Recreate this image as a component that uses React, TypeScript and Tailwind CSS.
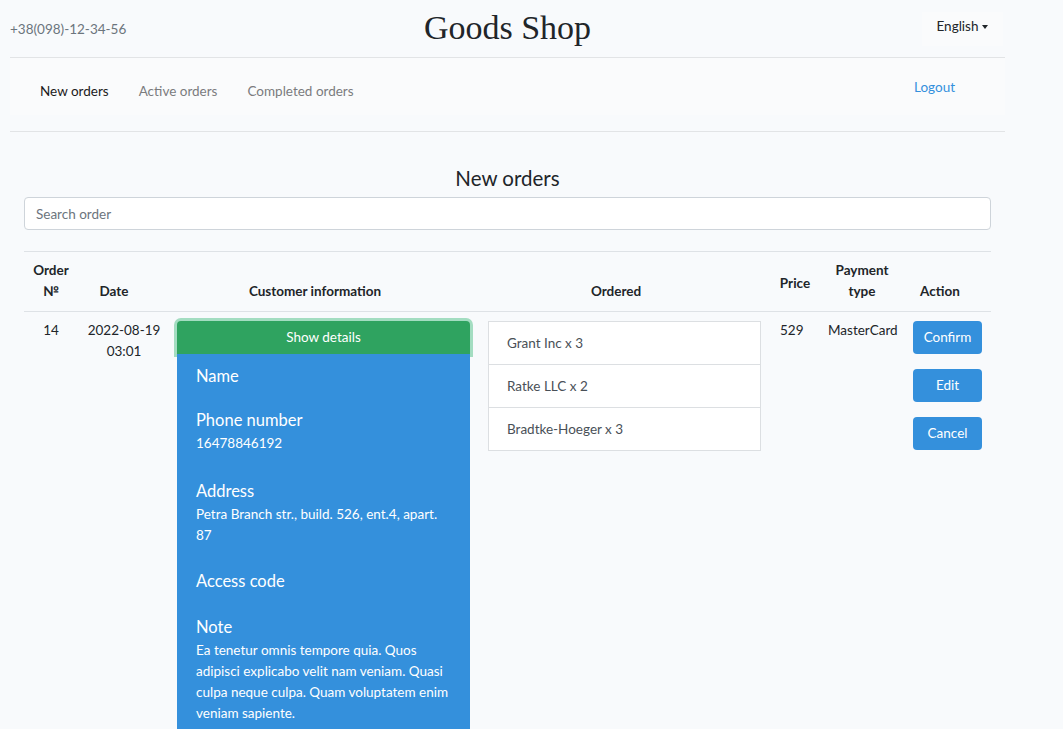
import React from "react";

const orderItems = ["Grant Inc x 3", "Ratke LLC x 2", "Bradtke-Hoeger x 3"];

function DetailBlock({
  title,
  lines,
  gap,
}: {
  title: string;
  lines: string[];
  gap: string;
}) {
  return (
    <div className={gap}>
      <div className="text-[16.5px] leading-[24px]">{title}</div>
      {lines.length > 0 && (
        <div className="pt-[1px] text-[13.5px] leading-[21px]">
          {lines.map((line) => (
            <div key={line} className="whitespace-nowrap">
              {line}
            </div>
          ))}
        </div>
      )}
    </div>
  );
}

function ActionButton({ label }: { label: string }) {
  return (
    <button className="h-[33px] w-[69px] rounded-[4px] bg-[#3490dc] text-[13.5px] text-white">
      {label}
    </button>
  );
}

export default function App() {
  return (
    <div className="min-h-screen bg-[#f8fafc] font-['Lato','Noto_Sans',sans-serif] text-[13.5px] text-[#212529]">
      <div className="ml-[10px] w-[995px]">
        <header className="grid h-[57px] grid-cols-[1fr_auto_1fr] items-center">
          <div className="pt-[1px] text-[#6c757d]">+38(098)-12-34-56</div>
          <h1 className="pb-[2px] font-['Liberation_Serif',serif] text-[34px] leading-[40px] text-[#212529]">
            Goods Shop
          </h1>
          <div className="flex justify-end">
            <div className="mr-[2px] flex h-[34px] w-[81px] items-center justify-center gap-[4px] bg-[#fafbfc] pb-[4px]">
              <span>English</span>
              <span className="mt-[1px] border-x-[3px] border-t-[4px] border-x-transparent border-t-[#212529]" />
            </div>
          </div>
        </header>

        <nav className="flex h-[58px] items-start justify-between border-t border-[#e2e4e6] bg-[#fafbfc] pl-[15px] pr-[34px]">
          <ul className="mt-[23px] flex">
            <li className="px-[15px] text-[#1a1a1a]">New orders</li>
            <li className="px-[15px] text-[#7b7c7e]">Active orders</li>
            <li className="px-[15px] text-[#7b7c7e]">Completed orders</li>
          </ul>
          <a className="mr-[16px] mt-[19px] text-[#3490dc]">Logout</a>
        </nav>
        <div className="mt-[16px] border-t border-[#e2e4e6]" />
      </div>

      <main className="ml-[24px] w-[967px]">
        <h2 className="mt-[31px] text-center text-[20.5px] leading-[30px]">New orders</h2>
        <input
          className="mt-[4px] h-[33px] w-full rounded-[4px] border border-[#ced4da] bg-white px-[11px] text-[13.5px] placeholder:text-[#6c757d]"
          placeholder="Search order"
        />

        <div className="mt-[21px] border-t border-[#dee2e6]">
          <div className="flex h-[60px] border-b border-[#dee2e6] pb-[9px] font-bold leading-[21px]">
            <div className="flex w-[54px] items-end justify-center text-center">
              Order
              <br />№
            </div>
            <div className="flex w-[72px] items-end justify-center">Date</div>
            <div className="flex w-[330px] items-end justify-center">Customer information</div>
            <div className="flex w-[272px] items-end justify-center">Ordered</div>
            <div className="ml-[18px] flex w-[50px] items-center justify-center pt-[12px]">Price</div>
            <div className="flex w-[84px] items-end justify-center text-center">
              Payment
              <br />
              type
            </div>
            <div className="flex w-[72px] items-end justify-center">Action</div>
          </div>

          <div className="flex items-start leading-[21px]">
            <div className="w-[54px] pt-[8px] text-center">14</div>
            <div className="w-[92px] pt-[8px] text-center">
              2022-08-19
              <br />
              03:01
            </div>
            <div className="ml-[7px] mt-[9px] w-[293px]">
              <button className="h-[33px] w-full rounded-t-[4px] bg-[#2fa360] text-white shadow-[0_0_0_3px_rgba(77,192,134,0.5)]">
                Show details
              </button>
              <div className="relative h-[380px] bg-[#3490dc] px-[19px] pt-[10px] text-white">
                <DetailBlock title="Name" lines={[]} gap="mb-[20px]" />
                <DetailBlock title="Phone number" lines={["16478846192"]} gap="mb-[25px]" />
                <DetailBlock
                  title="Address"
                  lines={["Petra Branch str., build. 526, ent.4, apart.", "87"]}
                  gap="mb-[23px]"
                />
                <DetailBlock title="Access code" lines={[]} gap="mb-[22px]" />
                <DetailBlock
                  title="Note"
                  lines={[
                    "Ea tenetur omnis tempore quia. Quos",
                    "adipisci explicabo velit nam veniam. Quasi",
                    "culpa neque culpa. Quam voluptatem enim",
                    "veniam sapiente.",
                  ]}
                  gap=""
                />
              </div>
            </div>
            <ul className="ml-[18px] mt-[9px] w-[273px] border border-[#dcdfe2] bg-white text-[#495057]">
              {orderItems.map((item, i) => (
                <li
                  key={item}
                  className={`flex items-center px-[18px] ${i > 0 ? "h-[43px] border-t border-[#dcdfe2]" : "h-[42px]"}`}
                >
                  {item}
                </li>
              ))}
            </ul>
            <div className="ml-[19px] w-[48px] pt-[8px]">529</div>
            <div className="w-[85px] pt-[8px]">MasterCard</div>
            <div className="mt-[9px] flex w-[69px] flex-col gap-[15px]">
              <ActionButton label="Confirm" />
              <ActionButton label="Edit" />
              <ActionButton label="Cancel" />
            </div>
          </div>
        </div>
      </main>
    </div>
  );
}
